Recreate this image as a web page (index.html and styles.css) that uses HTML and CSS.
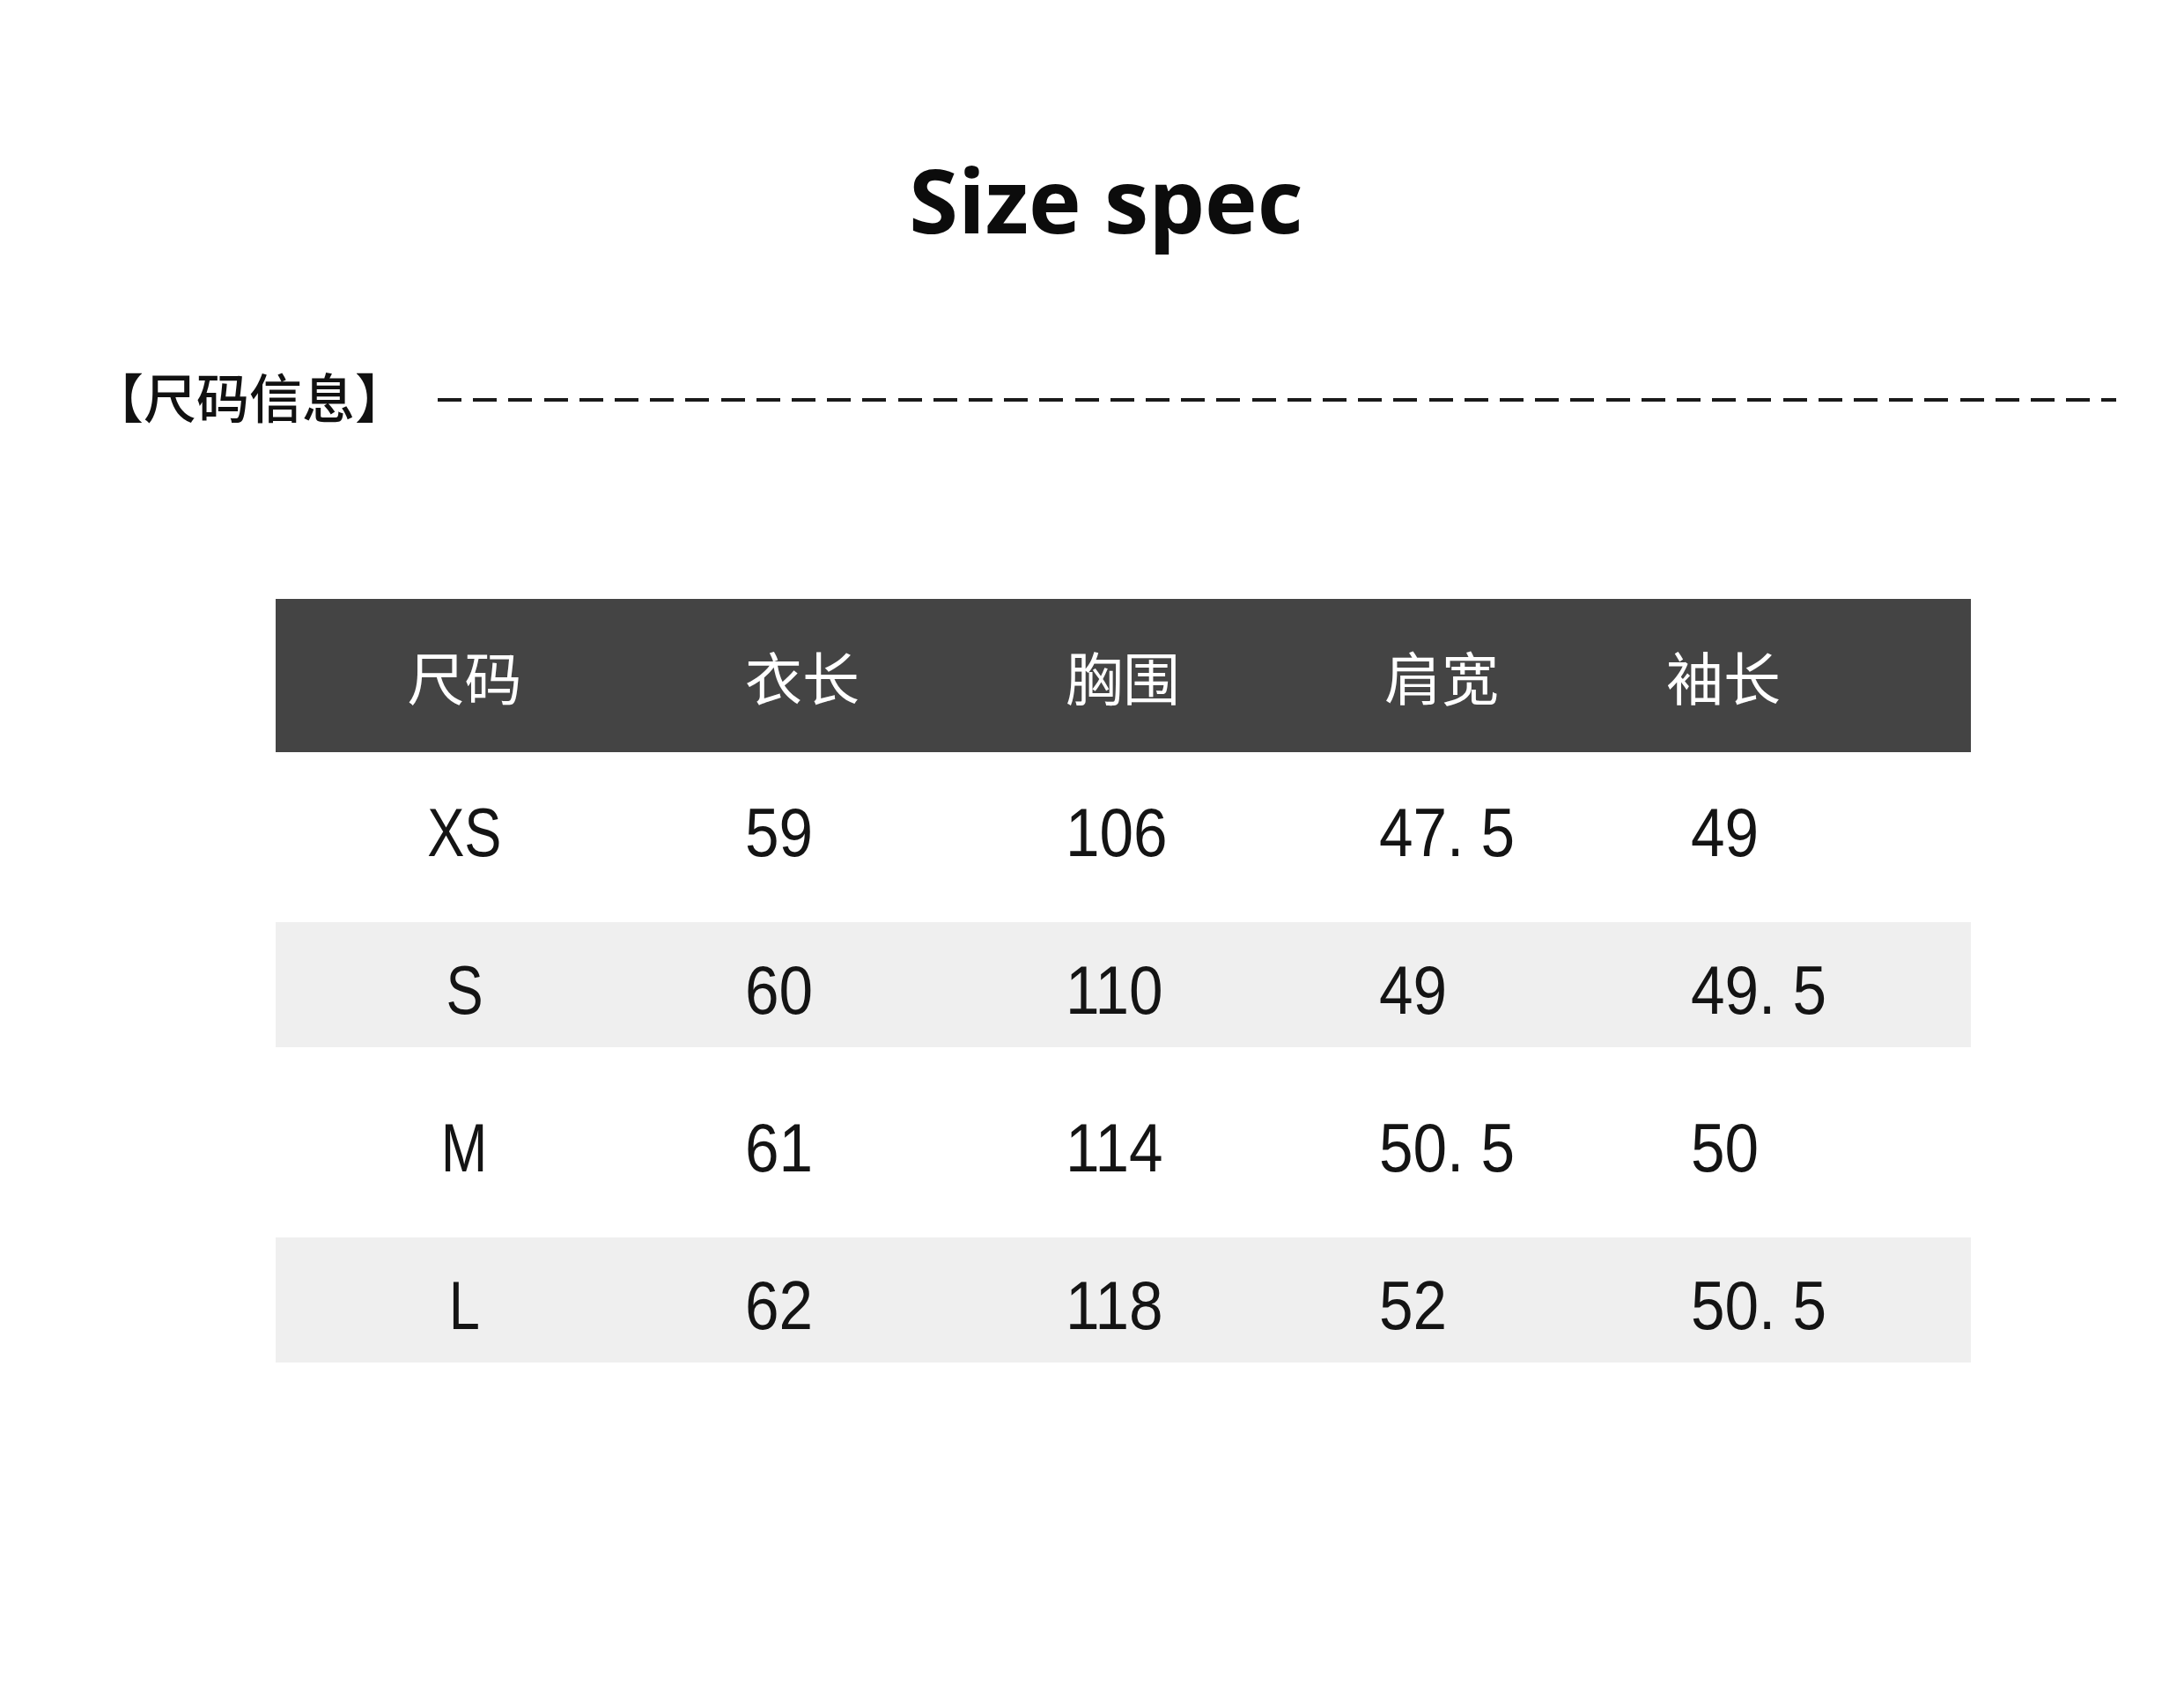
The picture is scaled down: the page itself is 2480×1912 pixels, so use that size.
FILE: index.html
```html
<!DOCTYPE html>
<html lang="zh">
<head>
<meta charset="utf-8">
<title>Size spec</title>
<link rel="stylesheet" href="styles.css">
</head>
<body>
<main class="page">
  <h1 class="title">Size spec</h1>
  <div class="section-head">
    <span class="label">【尺码信息】</span>
    <span class="dashes"></span>
  </div>
  <div class="table">
    <div class="row head">
      <div class="cell c1">尺码</div>
      <div class="cell c2">衣长</div>
      <div class="cell c3">胸围</div>
      <div class="cell c4 h4">肩宽</div>
      <div class="cell c5">袖长</div>
    </div>
    <div class="row data">
      <div class="band">
        <div class="cell c1"><span class="num">XS</span></div>
        <div class="cell c2"><span class="num">59</span></div>
        <div class="cell c3"><span class="num">106</span></div>
        <div class="cell c4"><span class="num">47. 5</span></div>
        <div class="cell c5 d5"><span class="num">49</span></div>
      </div>
    </div>
    <div class="row data shaded">
      <div class="band">
        <div class="cell c1"><span class="num">S</span></div>
        <div class="cell c2"><span class="num">60</span></div>
        <div class="cell c3"><span class="num">110</span></div>
        <div class="cell c4"><span class="num">49</span></div>
        <div class="cell c5 d5"><span class="num">49. 5</span></div>
      </div>
    </div>
    <div class="row data">
      <div class="band">
        <div class="cell c1"><span class="num">M</span></div>
        <div class="cell c2"><span class="num">61</span></div>
        <div class="cell c3"><span class="num">114</span></div>
        <div class="cell c4"><span class="num">50. 5</span></div>
        <div class="cell c5 d5"><span class="num">50</span></div>
      </div>
    </div>
    <div class="row data shaded">
      <div class="band">
        <div class="cell c1"><span class="num">L</span></div>
        <div class="cell c2"><span class="num">62</span></div>
        <div class="cell c3"><span class="num">118</span></div>
        <div class="cell c4"><span class="num">52</span></div>
        <div class="cell c5 d5"><span class="num">50. 5</span></div>
      </div>
    </div>
  </div>
</main>
</body>
</html>
```

FILE: styles.css
```css
html, body {
  margin: 0;
  padding: 0;
  background: #ffffff;
}

body {
  width: 2480px;
  height: 1912px;
  overflow: hidden;
  font-family: "Noto Sans CJK SC", "Noto Sans", sans-serif;
  color: #161616;
}

.page {
  padding-top: 176px;
}

.title {
  margin: 0;
  padding-left: 32px;
  text-align: center;
  font-family: "Open Sans", "Noto Sans", sans-serif;
  font-weight: 700;
  font-size: 101px;
  line-height: 100px;
  color: #0c0c0c;
}

.section-head {
  margin-top: 143px;
  margin-left: 103px;
  margin-right: 77px;
  display: flex;
  align-items: center;
  gap: 34px;
  height: 60px;
}

.label {
  font-family: "Noto Sans CJK SC", sans-serif;
  font-weight: 500;
  font-size: 60px;
  line-height: 60px;
  color: #111111;
  white-space: nowrap;
}

.dashes {
  flex: 1;
  height: 4px;
  margin-top: 10px;
  background: repeating-linear-gradient(90deg, #1a1a1a 0 27px, transparent 27px 40.2px);
}

.table {
  margin-top: 201px;
  margin-left: 313px;
  width: 1925px;
  display: flex;
  flex-direction: column;
}

.row.head,
.band {
  display: grid;
  grid-template-columns: 429px 468px 356px 326px 1fr;
  align-items: center;
}

.row.head {
  height: 174px;
  background: #444444;
  color: #ffffff;
  font-family: "Noto Sans CJK SC", sans-serif;
  font-size: 65px;
  line-height: 1;
}

.row.data {
  padding: 14px 0 23px;
}

.band {
  height: 142px;
  box-sizing: border-box;
  padding-top: 12px;
}

.shaded .band {
  background: #efefef;
}

.cell {
  white-space: nowrap;
}

.c1 {
  text-align: center;
}

.c2 {
  padding-left: 104px;
}

.h4 {
  padding-left: 6px;
}

.d5 {
  padding-left: 28px;
}

.num {
  display: inline-block;
  font-family: "Liberation Sans", Arial, sans-serif;
  font-size: 77px;
  line-height: 1;
  color: #141414;
  transform: scaleX(0.9);
  transform-origin: left center;
}

.c1 .num {
  transform: scaleX(0.82);
  transform-origin: center center;
}
```
